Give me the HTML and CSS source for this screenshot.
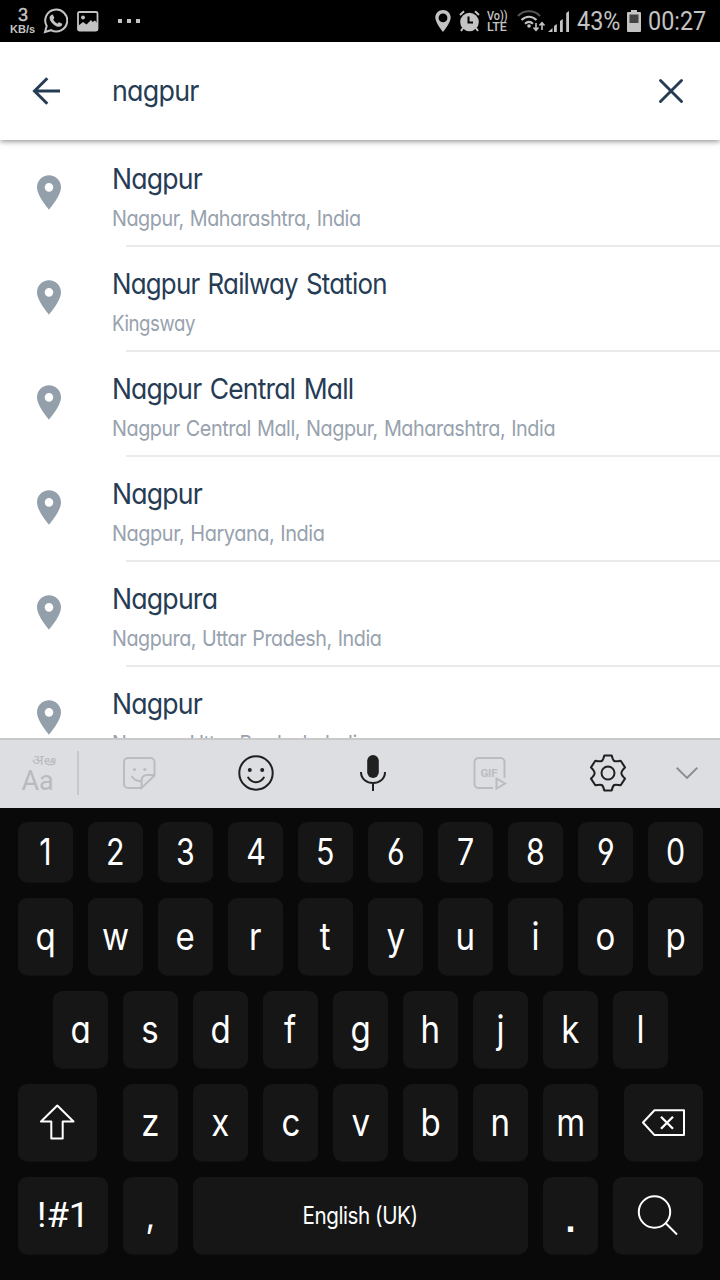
FILE: index.html
```html
<!DOCTYPE html>
<html lang="en">
<head>
<meta charset="utf-8">
<title>Location search</title>
<link rel="stylesheet" href="styles.css">
</head>
<body>
<svg class="defs" width="0" height="0">
  <symbol id="pin" viewBox="5 2 14 20"><path fill="currentColor" d="M12 2C8.13 2 5 5.13 5 9c0 5.2 7 13 7 13s7-7.800 7-13c0-3.870-3.130-7-7-7zm0 9.500a2.500 2.500 0 1 1 0-5 2.500 2.500 0 0 1 0 5z"/></symbol>
</svg>
<div class="screen">
  <div class="status">
    <div class="rate"><b>3</b><span class="fit" data-width="25">KB/s</span></div>
    <svg class="whatsapp" width="25" height="26" viewBox="0 0 25 26" fill="none" stroke="currentColor"><path stroke-width="2" d="M2 24l1.700-6A11 11 0 1 1 8 22.200z"/><path fill="currentColor" stroke="none" d="M8 7.200c1-1 1.800-.9 2.300.2l.9 2.200c.2.600-.2 1.200-1 2 1 2 2.300 3.100 4.300 4.100.9-1.100 1.400-1.600 2-1.300l2.300 1.100c.7.400.4 1.500-.2 2.200-1.700 1.900-4.500 1.300-7.400-.8-2.700-1.900-4.800-5.100-4.600-7.200.1-1 .7-1.900 1.400-2.500z"/></svg>
    <svg class="picture" width="22" height="21" viewBox="0 0 22 21"><rect x="1" y="1" width="19.500" height="18.500" rx="1.500" fill="none" stroke="currentColor" stroke-width="1.800"/><circle cx="6" cy="6.500" r="1.900" fill="currentColor"/><path fill="currentColor" d="M1 15l5-4 3.500 2.500L14 9l1.500 2L18 9.500l2.500 3V20H1z"/></svg>
    <svg class="dots" width="24" height="6" viewBox="0 0 24 6" fill="currentColor"><path d="M0 1h4v4H0zM9 1h4v4H9zM18 1h4v4h-4z"/></svg>
    <svg class="gps" width="16" height="22" viewBox="0 0 16 22"><path fill="currentColor" fill-rule="evenodd" d="M8 0C3.500 0 .3 3.400.3 7.600.3 13 8 22 8 22s7.700-9 7.700-14.400C15.700 3.400 12.500 0 8 0zm0 3.500a4.400 4.400 0 1 1 0 8.800 4.400 4.400 0 0 1 0-8.800z"/></svg>
    <svg class="alarm" width="21" height="22" viewBox="0 0 21 22"><circle cx="10.500" cy="12" r="9.300" fill="currentColor"/><path d="M1 5l4-3.700M20 5l-4-3.700M4 18l-2 3M17 18l2 3" fill="none" stroke="currentColor" stroke-width="2"/><path d="M9.500 6.500v6h4.500" fill="none" stroke="#000" stroke-width="2"/></svg>
    <div class="volte"><span class="fit" data-width="21">Vo))</span><span class="fit" data-width="20">LTE</span></div>
    <svg class="wifi" width="29" height="22" viewBox="0 0 29 22" fill="none" stroke="currentColor" stroke-width="2"><path stroke="#555" d="M1 6C7-.2 17-.2 23 6"/><path d="M4.500 10c4.500-4.500 10.500-4.500 15 0M8 13.700c2.500-2.300 5.500-2.300 8 0"/><circle cx="12" cy="16" r="1.800" fill="currentColor" stroke="none"/><path stroke-width="1.600" d="M19 13v7M16.500 17.500l2.500 2.800 2.500-2.800M25 20v-7M22.500 15.500l2.500-2.800 2.500 2.800"/></svg>
    <svg class="signal" width="22" height="22" viewBox="0 0 22 22" fill="currentColor"><path d="M0 22l4.500-4v4zM6 16l2.800-2v8H6zM12 11l2.800-2v13H12zM18.200 3L21 1v21h-2.800z"/></svg>
    <div class="pct"><span class="fit" data-width="43">43%</span></div>
    <svg class="battery" width="14" height="22" viewBox="0 0 14 22"><path fill="currentColor" d="M4 0h6v2h3q1 0 1 1v18q0 1-1 1H1q-1 0-1-1V3q0-1 1-1h3z"/><path fill="#444" d="M2.500 4.500h9V13h-9z"/></svg>
    <div class="clock"><span class="fit" data-width="58">00:27</span></div>
  </div>

  <div class="search">
    <svg class="back" width="30" height="30" viewBox="0 0 30 30" fill="none" stroke="currentColor" stroke-width="3"><path d="M28 15H2.500M15.300 2.200L2.500 15l12.800 12.800"/></svg>
    <div class="query"><span class="fit" data-width="87">nagpur</span></div>
    <svg class="clear" width="26" height="26" viewBox="0 0 26 26" fill="none" stroke="currentColor" stroke-width="2.900" stroke-linecap="round"><path d="M2.500 2.500l21 21M23.500 2.500l-21 21"/></svg>
  </div>

  <div class="results">
    <div class="item"><svg class="pin"><use href="#pin"/></svg><div class="text"><div class="title"><span class="fit" data-width="90">Nagpur</span></div><div class="sub"><span class="fit" data-width="249">Nagpur, Maharashtra, India</span></div></div></div>
    <div class="item"><svg class="pin"><use href="#pin"/></svg><div class="text"><div class="title"><span class="fit" data-width="275">Nagpur Railway Station</span></div><div class="sub"><span class="fit" data-width="83">Kingsway</span></div></div></div>
    <div class="item"><svg class="pin"><use href="#pin"/></svg><div class="text"><div class="title"><span class="fit" data-width="241">Nagpur Central Mall</span></div><div class="sub"><span class="fit" data-width="443">Nagpur Central Mall, Nagpur, Maharashtra, India</span></div></div></div>
    <div class="item"><svg class="pin"><use href="#pin"/></svg><div class="text"><div class="title"><span class="fit" data-width="90">Nagpur</span></div><div class="sub"><span class="fit" data-width="212">Nagpur, Haryana, India</span></div></div></div>
    <div class="item"><svg class="pin"><use href="#pin"/></svg><div class="text"><div class="title"><span class="fit" data-width="105">Nagpura</span></div><div class="sub"><span class="fit" data-width="269">Nagpura, Uttar Pradesh, India</span></div></div></div>
    <div class="item"><svg class="pin"><use href="#pin"/></svg><div class="text"><div class="title"><span class="fit" data-width="90">Nagpur</span></div><div class="sub"><span class="fit" data-width="256">Nagpur, Uttar Pradesh, India</span></div></div></div>
  </div>

  <div class="tools">
    <div class="lang"><span class="hindi"><span class="fit end" data-width="24">अఆ</span></span><span class="latin">Aa</span></div>
    <div class="rule"></div>
    <svg class="faint" width="36" height="36" viewBox="0 0 36 36" fill="none" stroke="currentColor" stroke-width="2"><path d="M20.500 33H7a4 4 0 0 1-4-4V7a4 4 0 0 1 4-4h22.500a4 4 0 0 1 4 4v13.500L20.500 33v-7q0-6 6-6h6.500M10.500 21c3 4.500 6.500 5.500 10.500 5"/><g fill="currentColor" stroke="none"><circle cx="13.500" cy="14.500" r="1.600"/><circle cx="23.800" cy="14.500" r="1.600"/></g></svg>
    <svg width="36" height="36" viewBox="0 0 36 36" fill="none" stroke="currentColor" stroke-width="2"><circle cx="18" cy="18" r="16.700"/><path stroke-linecap="round" d="M10.200 22.500c3.500 6.200 12.100 6.200 15.600 0"/><g fill="currentColor" stroke="none"><circle cx="11.800" cy="15" r="2"/><circle cx="24.200" cy="15" r="2"/></g></svg>
    <svg width="36" height="38" viewBox="0 0 36 38" fill="none" stroke="currentColor" stroke-width="2"><rect x="12.200" y="1" width="11.600" height="23" rx="5.800" fill="currentColor" stroke="none"/><path d="M6 18c0 14.800 24 14.800 24 0M18 29v8"/></svg>
    <svg class="faint" width="36" height="36" viewBox="0 0 36 36" fill="none" stroke="currentColor" stroke-width="2"><path d="M21 33H6.500a4 4 0 0 1-4-4V7a4 4 0 0 1 4-4h22a4 4 0 0 1 4 4v16M24.500 23.500v10l8.500-5z"/><text class="gif" x="8.500" y="22" textLength="17">GIF</text></svg>
    <svg width="38" height="40" viewBox="-20 -20 38 40" fill="none" stroke="currentColor" stroke-width="2" stroke-linejoin="round"><circle r="6.500"/><path d="M-3.700-17.500H3.700Q4.800-12.800 6.300-12 7.800-11.200 12.700-12.300L17-5.600Q13.400-2.200 13.400 0 13.400 2.200 17 5.600L12.700 12.300Q7.800 11.200 6.300 12 4.800 12.800 3.700 17.500H-3.700Q-4.800 12.800-6.300 12-7.800 11.200-12.700 12.300L-17 5.600Q-13.400 2.200-13.400 0-13.400-2.200-17-5.600L-12.700-12.300Q-7.800-11.200-6.300-12-4.800-12.800-3.700-17.500z"/></svg>
    <svg class="chev" width="24" height="14" viewBox="0 0 24 14" fill="none" stroke="currentColor" stroke-width="1.900"><path d="M1.700 1.800L12 12 22.300 1.800"/></svg>
  </div>

  <div class="keyboard">
    <div class="row nums"><div class="key"><span>1</span></div><div class="key"><span>2</span></div><div class="key"><span>3</span></div><div class="key"><span>4</span></div><div class="key"><span>5</span></div><div class="key"><span>6</span></div><div class="key"><span>7</span></div><div class="key"><span>8</span></div><div class="key"><span>9</span></div><div class="key"><span>0</span></div></div>
    <div class="row letters"><div class="key"><span>q</span></div><div class="key"><span>w</span></div><div class="key"><span>e</span></div><div class="key"><span>r</span></div><div class="key"><span>t</span></div><div class="key"><span>y</span></div><div class="key"><span>u</span></div><div class="key"><span>i</span></div><div class="key"><span>o</span></div><div class="key"><span>p</span></div></div>
    <div class="row letters"><div class="key"><span>a</span></div><div class="key"><span>s</span></div><div class="key"><span>d</span></div><div class="key"><span>f</span></div><div class="key"><span>g</span></div><div class="key"><span>h</span></div><div class="key"><span>j</span></div><div class="key"><span>k</span></div><div class="key"><span>l</span></div></div>
    <div class="row letters">
      <div class="key shift"><svg width="36" height="38" viewBox="0 0 36 38" fill="none" stroke="currentColor" stroke-width="2" stroke-linejoin="round"><path d="M17.300 1.500L1 17.500h10.300v17h11.400v-17H33.500z"/></svg></div>
      <div class="key"><span>z</span></div><div class="key"><span>x</span></div><div class="key"><span>c</span></div><div class="key"><span>v</span></div><div class="key"><span>b</span></div><div class="key"><span>n</span></div><div class="key"><span>m</span></div>
      <div class="key erase"><svg width="44" height="28" viewBox="0 0 44 28" fill="none" stroke="currentColor" stroke-width="2" stroke-linejoin="round"><path d="M1 13.500L12.500 1.300H42v24.800H12.500z"/><path stroke-width="2.300" d="M19 7.700l12 12M31 7.700L19 19.700"/></svg></div>
    </div>
    <div class="row">
      <div class="key wide"><span class="fit mid symbols" data-width="52">!#1</span></div>
      <div class="key comma">,</div>
      <div class="key space"><span class="fit mid" data-width="115">English (UK)</span></div>
      <div class="key dot"><span>.</span></div>
      <div class="key wide"><svg width="42" height="42" viewBox="0 0 42 42" fill="none" stroke="currentColor" stroke-width="2"><circle cx="17.500" cy="17" r="15.700"/><path d="M28.500 28L40 39.500"/></svg></div>
    </div>
  </div>
</div>
<script src="fit.js"></script>
</body>
</html>
```

FILE: styles.css
```css
* { box-sizing: border-box; }
body { margin: 0; background: #fff; font-family: Inter, "Noto Sans", sans-serif; font-feature-settings: "cv11", "cv03", "cv04"; }
svg { display: block; flex: none; }
.defs { position: absolute; }
.screen { width: 720px; height: 1280px; overflow: hidden; display: flex; flex-direction: column; }
.fit { display: inline-block; white-space: nowrap; transform-origin: 0 50%; }
.fit.mid { transform-origin: 50% 50%; }
.fit.end { transform-origin: 100% 50%; }

/* status bar */
.status { height: 42px; flex: none; background: #000; color: #c3c3c3; display: flex; align-items: center; padding-left: 10px; font-family: Roboto, sans-serif; }
.rate { width: 33px; display: flex; flex-direction: column; font-family: "Liberation Sans", sans-serif; font-size: 11px; line-height: 12px; font-weight: 700; padding-top: 1px; align-items: flex-start; }
.rate b { width: 26px; text-align: center; font-size: 18px; line-height: 15px; font-weight: 400; -webkit-text-stroke: .4px; }
.picture { margin-left: 9px; }
.dots { margin-left: 19px; }
.gps { margin-left: 293px; }
.alarm { margin-left: 8px; }
.volte { width: 30px; margin-left: 7px; display: flex; flex-direction: column; align-items: flex-start; font-size: 12.500px; line-height: 11px; font-weight: 500; }
.wifi { margin-top: -1px; }
.signal { margin-left: 2px; margin-top: -1px; }
.battery { margin-top: -1px; }
.pct, .clock { font-size: 25px; line-height: 42px; padding-top: 1px; }
.pct { width: 50px; margin-left: 7px; }
.clock { margin-left: 7px; width: 58px; }

/* search bar */
.search { height: 98px; flex: none; display: flex; align-items: center; padding: 0 36px 0 32px; color: #263c55; box-shadow: 0 1px 6px rgba(0,0,0,.5); position: relative; background: #fff; }
.query { flex: 1; margin-left: 50px; font-size: 29px; line-height: 40px; letter-spacing: -.8px; }

/* results */
.results { height: 598px; flex: none; overflow: hidden; padding-top: 2px; }
.item { height: 105px; display: flex; padding-left: 37px; }
.pin { width: 24px; height: 35px; margin-top: 33px; color: #939fab; }
.text { flex: 1; margin-left: 51px; padding-top: 19px; height: 105px; background: linear-gradient(#ebebeb, #ebebeb) 14px 103px / 100% 2px no-repeat; }
.title { font-size: 29px; line-height: 35px; height: 35px; color: #263c55; letter-spacing: -.9px; word-spacing: 2px; }
.sub { font-size: 22px; line-height: 28px; height: 28px; margin-top: 8px; color: #97a2ae; letter-spacing: -.5px; word-spacing: 1px; }

/* keyboard toolbar */
.tools { height: 70px; flex: none; background: #dddee2; border-top: 2px solid #c9c9ca; display: grid; grid-template-columns: 77px 4px repeat(5, 117px) 42px; align-items: center; justify-items: center; color: #202020; padding-bottom: 2px; }
.tools > svg:not(.chev) { margin-right: 1px; }
.lang { display: flex; flex-direction: column; color: #b9babc; font-family: Roboto, "Noto Sans", sans-serif; width: 34px; }
.hindi { font-size: 14px; line-height: 14px; height: 16px; text-align: right; }
.latin { font-size: 27px; line-height: 24px; }
.rule { width: 2px; height: 44px; background: #c6c7c9; justify-self: start; }
.faint { color: #bbbcbe; }
.gif { font: 700 11.500px Roboto, sans-serif; fill: currentColor; stroke: none; }
.chev { color: #8c8d90; }

/* keys */
.keyboard { height: 472px; flex: none; background: #090909; padding: 14px 17px 0 18px; display: flex; flex-direction: column; gap: 16px; }
.row { display: flex; gap: 15px; height: 77px; flex: none; justify-content: center; }
.row.nums { height: 60px; }
.key { width: 55px; flex: none; background: #161616; border-radius: 9px; box-shadow: 0 1px 0 #111; color: #fff; font-size: 38px; display: flex; align-items: center; justify-content: center; }
.nums span { font-size: 37px; transform: scaleX(.82); margin-top: -1px; }
.letters span { transform: scaleX(.87); margin-top: -1px; }
.shift, .erase { width: 79px; }
.shift { margin-right: 11px; }
.erase { margin-left: 11px; }
.wide { width: 90px; }
.space { width: 335px; font-size: 24px; letter-spacing: -.5px; }
.symbols { font-size: 35px; font-family: Roboto, sans-serif; margin-top: -1px; }
.comma { font-size: 34px; }
.dot { font-size: 36px; font-family: "Liberation Sans", sans-serif; font-weight: 700; padding-top: 9px; }
```

FILE: fit.js
```js
// Condense each label horizontally to its set width.
document.querySelectorAll('.fit').forEach(function (el) {
  el.style.transform = 'scaleX(' + el.dataset.width / el.offsetWidth + ')';
});
```
